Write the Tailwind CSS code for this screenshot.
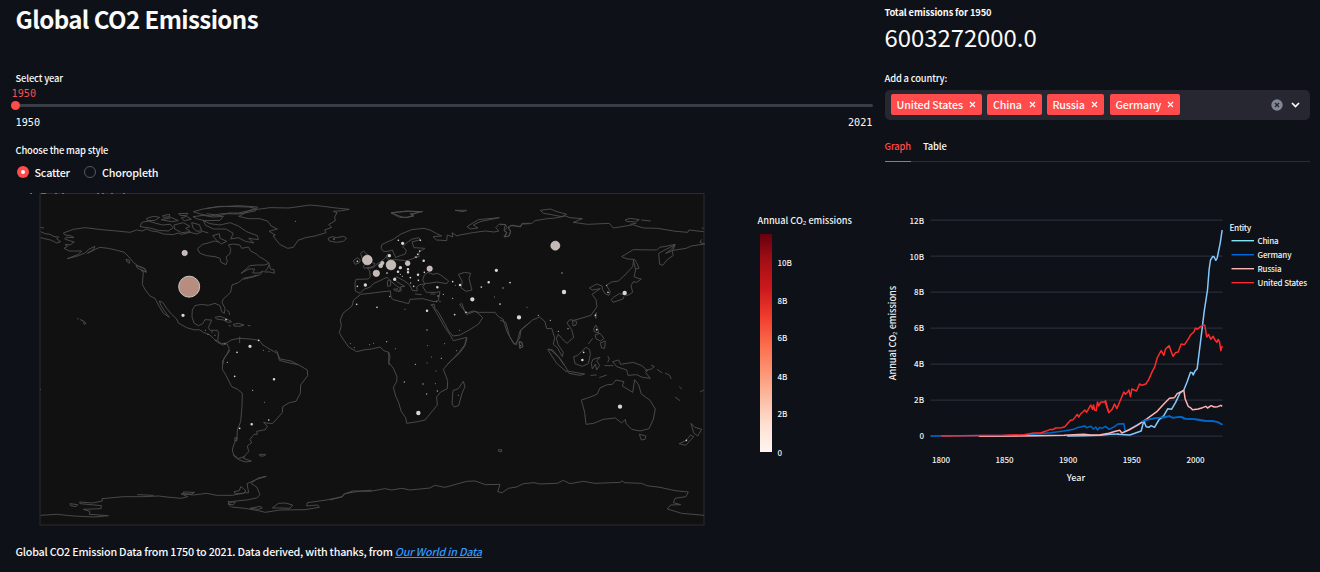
<!DOCTYPE html>
<html lang="en">
<head>
<meta charset="utf-8">
<title>Global CO2 Emissions</title>
<script src="https://cdn.jsdelivr.net/npm/@tailwindcss/browser@4"></script>
</head>
<body class="w-[1320px] h-[572px] overflow-hidden bg-[#0e1117] text-[#fafafa] font-['Noto_Sans_CJK_SC',sans-serif]">
<main class="flex h-[572px]">
  <section class="flex flex-col w-[872.500px] pl-[15.500px] shrink-0">
    <h1 class="h-[40px] leading-[38px] text-[24.1px] tracking-[-0.6px] font-bold whitespace-nowrap">Global CO2 Emissions</h1>
    <div class="mt-[30px] h-[16px] leading-[16px] text-[9.4px] tracking-[-0.14px] font-medium">Select year</div>
    <div class="-ml-[4px] mt-[1px] h-[13px] leading-[13px] text-[10.2px] text-[#ff4b4b] font-['DejaVu_Sans_Mono',monospace]">1950</div>
    <div class="-ml-[4.500px] flex items-center h-[11px]">
      <div class="size-[9px] rounded-full bg-[#ff4b4b]"></div>
      <div class="flex-1 h-[3px] rounded-r bg-[#3b3d46]"></div>
    </div>
    <div class="flex justify-between mt-[5px] h-[13px] leading-[13px] text-[10.2px] font-['DejaVu_Sans_Mono',monospace]"><span>1950</span><span>2021</span></div>
    <div class="mt-[14px] h-[16px] leading-[15px] text-[9.4px] tracking-[-0.15px] font-medium">Choose the map style</div>
    <div class="flex items-center mt-[4px] h-[18px] leading-[18px] text-[10.8px] tracking-[-0.2px] font-medium">
      <span class="ml-[1.500px] size-[12px] rounded-full bg-[#ff4b4b] flex items-center justify-center"><span class="size-[4px] rounded-full bg-white"></span></span>
      <span class="ml-[5.500px] w-[49.500px]">Scatter</span>
      <span class="size-[12px] rounded-full border border-[#555861]"></span>
      <span class="ml-[6px]">Choropleth</span>
    </div>
    <svg class="-ml-[15.500px] mt-[4px] block shrink-0" width="872" height="345" viewBox="0 185 872 345">
      <defs><linearGradient id="reds" x1="0" y1="1" x2="0" y2="0">
        <stop offset="0" stop-color="#fff5f0"/><stop offset=".125" stop-color="#fee0d2"/><stop offset=".25" stop-color="#fcbba1"/><stop offset=".375" stop-color="#fc9272"/><stop offset=".5" stop-color="#fb6a4a"/><stop offset=".625" stop-color="#ef3b2c"/><stop offset=".75" stop-color="#cb181d"/><stop offset=".875" stop-color="#a50f15"/><stop offset="1" stop-color="#67000d"/>
      </linearGradient></defs>
      <rect x="40" y="193.500" width="664" height="331.500" fill="#111" stroke="#2c2c2c"/>
      <path d="M30 193.500h2M41 193.500h5M55 193.500h2M62 193.500h2M97 193.500h2M102 193.500h2M111 193.500h2M123 193.500h2" stroke="#6d6f73"/>
      <g transform="translate(30 185) scale(.33333)" fill="none" stroke="#4d4d4d" stroke-width="2.800" stroke-linejoin="round">
        <!-- North America -->
        <path d="M32 127L42 129M32 140L45 146 60 148 72 155 86 156 80 162 92 170 80 174 65 166 48 162 32 158M337 138L320 135 300 142 260 138 215 134 165 128 130 133 100 144 105 150 122 152 132 158 108 157 104 162 122 168 133 171 120 180 105 178 112 184 102 190 118 198 135 198 155 198 145 208 112 221 140 214 165 204 178 192 195 184 190 194 172 205 198 192 210 187 235 190 262 196 283 202 295 214 310 232 325 244 345 252 348 262 333 254 340 264 337 298 346 315 360 333 375 340 388 365 400 385 418 397 405 380 392 360 388 348 398 352 410 370 425 388 440 402 445 414 470 428 495 435 508 434 520 442 540 450 550 460 562 472 580 480 590 476 598 490 592 505 582 520 578 540M590 474L575 476 563 468 566 445 562 436 540 436 535 428 545 405 525 404 518 416 505 422 492 414 486 395 487 375 495 362 515 358 535 361 555 355 570 362 575 380 583 385 585 370 576 352 580 342 602 322 606 300 625 293 640 280 665 275 680 270"/>
        <path d="M288 223L298 226 299 235 292 231ZM318 241L332 245 345 251 349 261 338 257 322 249ZM141 401L146 402M150 404L160 407 168 415 163 418 159 409M555 397L570 394 590 402 605 410 596 413 580 405 560 402ZM596 422L603 423M610 418L625 415 642 420 630 424 612 423ZM653 422H662M590 376L597 380 599 390"/>
        <path d="M337 138L350 132 365 138 385 141 400 147 430 149 444 144 455 148 480 142 500 147 518 139 535 144M330 125L336 112 355 108 378 115 398 120 420 118 430 128 415 138 385 136 360 129ZM350 100L370 94 389 97 376 106 352 107ZM398 92L418 88 420 95 400 97ZM393 104L425 98 445 107 425 110ZM446 86L474 85 469 92 450 91ZM454 99L470 94 484 103 463 107ZM490 80L520 72 560 66 625 62 683 66 676 78 625 87 575 86 542 93 515 88ZM489 95L520 91 548 96 580 94 570 106 525 107 502 102ZM520 107L540 116 570 120 600 113 625 123 650 140 682 152 685 164 656 160 672 174 646 169 625 158 602 162 610 145 588 132 550 132 527 121ZM432 120L460 113 480 124 467 130 481 140 455 143 434 132ZM485 113L508 119 515 137 501 139 489 129ZM548 152L568 146 570 160 590 169 574 177 560 166Z"/>
        <path d="M567 171L553 168 535 174 517 178 502 192 510 205 530 212 555 215 570 220 573 232 588 239 592 228 588 216 600 206 602 190 595 180 610 177 630 180 635 190 655 186 662 198 678 206 688 215"/>
        <!-- Eastern Canada, Greenland, Atlantic coasts -->
        <g transform="translate(510 0)">
          <path d="M178 215L195 225 208 235 193 240 170 240 150 242 135 255 123 265 147 252 164 252 158 264 177 264 190 258 180 269 160 276 146 279 130 283M203 250L208 238 211 252 222 254 223 265 210 261 194 261Z"/>
          <path d="M20 70L60 64 105 65 145 66 167 70 147 77 116 84 85 84 60 92 20 86M116 94L150 76 210 68 267 69 330 60 370 64 408 69 448 73 425 77 400 79 411 83 404 96 406 107 386 119 395 127 374 135 378 143 345 153 317 158 294 166 280 187 263 190 239 178 219 153 226 150 207 139 232 132 213 123 204 109 180 101 145 101ZM384 160L397 155 410 158 431 154 440 160 430 169 410 172 388 168Z"/>
          <path d="M75 478L93 465 118 460 150 462 177 466 189 480 210 493 232 505 240 522 273 528 296 540M119 455V474"/>
          <path d="M574 83L600 81 618 78 660 80 634 90 642 93 618 98 603 95Z"/>
        </g>
        <!-- Europe, Africa, west Asia -->
        <g transform="translate(900 0)">
          <path d="M600 116L578 117 568 124 543 122 534 126 542 138 538 153 524 156 531 143 522 135 526 119 508 117 497 128 507 138 492 141 466 138 428 143 390 150 381 153 366 143 369 156 352 150 350 167 319 165 309 155 335 153 320 146 302 136 282 130 245 134 213 147 190 163 156 178 153 190 161 200 178 198 187 195 197 218 211 212 226 207 229 195 218 185 234 170 248 162 267 158 271 164 246 171 252 188 285 190 272 198 266 203 267 216 255 214 252 220 231 227 195 224 176 225 170 218 179 211 174 206 166 219 152 230 138 239 130 248 112 250 119 258 121 275 115 282 78 283 75 295 76 318 90 325 103 312 120 307 130 296 154 285 160 282 171 277 184 290 199 302 212 311 204 320 214 317 211 306 224 304 200 290 193 278 201 276 222 287 239 300 247 316 262 318 260 306 269 299 285 297 278 305 289 322 320 322 330 320 325 347 312 350 278 341 240 343 236 356 190 344 183 338 181 318 160 320 120 325 92 328 71 345 66 363 39 385 31 405 34 422 28 443 39 462 56 486 80 500 100 495 125 492 150 486 162 497 176 502 177 540"/>
          <path d="M92 205L101 198 113 210 117 219 127 233 135 236 130 245 103 250 100 243 108 236 97 222ZM70 227L82 218 91 225 87 234 75 238ZM172 288L182 285 182 302 173 304ZM190 313L203 311 200 319ZM255 327L275 329M301 327H316M278 285L283 270 294 262 309 268 322 265 332 270 356 288 350 296 320 291 296 295 283 295ZM385 268L404 262 422 265 417 280 421 297 426 315 408 319 393 308 397 290ZM411 125L445 104 508 98 450 110 430 120 444 129 421 132ZM375 76H410L398 80ZM183 84L201 81 240 79 278 80 240 87 249 93 228 97 209 97Z"/>
          <path d="M302 361L312 357 315 370 326 383 344 415 356 438 369 453 390 450 421 433 446 417 458 398 446 386 435 379 416 386 410 389 404 379 396 356 389 358 398 371 411 384 430 378 446 382 495 382 505 395 519 402 531 440 550 475 559 479 570 438 600 412M304 358L328 398 340 420 361 451 370 467 410 457 404 480 386 503 365 526 350 540M568 470L576 473 578 485 570 489Z"/>
        </g>
        <!-- East Asia -->
        <g transform="translate(1410 0)">
          <path d="M0 119L16 118 21 128 12 137 20 143 12 155 26 154 32 140 25 130 35 120 62 126 66 115 96 115 105 107 142 101 166 99 196 93 210 98 247 101 220 112 263 118 328 115 340 129 378 123 398 119 430 129 472 130 528 139 563 142 567 135 611 140M611 130L605 129M605 163L600 172 614 177 574 183 558 190 520 196 497 205 515 192 526 178 502 183 479 187 470 195 400 194 365 215 382 222 401 223 398 245 375 270 355 288 335 291 319 301 331 320 327 331 315 326 308 314 306 303 290 297 268 309 277 315 301 311 276 328 288 344 291 365 273 391 240 401 221 406 209 404 201 414 215 434 221 457 201 475 185 460 175 448 169 460 175 480 190 502 187 515 172 488 160 478 164 458 155 430 140 431 135 410 119 396 98 405 63 434 59 460 44 478 29 455 18 413 0 405"/>
          <path d="M400 225L407 255 402 275 414 280 424 282 410 292 400 290 393 302 398 322 384 331 358 326 340 337 334 343 339 352 369 342 372 334M403 222L410 233 417 250 407 252M479 238L476 205 500 192 525 180 517 200 520 211 502 224 488 241ZM121 76L152 72 168 79 200 88 185 95 150 88 130 85ZM375 105L390 100 418 104 406 111 380 109ZM424 105L452 108M390 118L409 115M218 407L230 409 228 420 219 423ZM285 393L289 383 288 400ZM281 432L287 420 293 430 296 444 283 440ZM285 450L300 445 312 460 302 468 289 462ZM301 474L316 468 314 490 305 489ZM265 477L278 460M57 470L65 471 69 485 59 490Z"/>
          <path d="M145 492L158 495 175 515 192 540"/>
        </g>
        <!-- South America, Antarctica west -->
        <g transform="translate(0 495)">
          <path d="M600 0L590 15 578 32 577 58 588 76 605 110 623 118 637 130 636 170 632 215 622 240 621 262 611 285 607 300 612 318 628 330 648 336 664 333 640 325 647 314 656 305 652 288 665 278 660 268 672 253 682 253 680 244 706 239 712 229 701 217 714 220 728 220 740 207 757 188 758 170 778 158 798 154 811 130 812 105 833 77 832 60 805 44 779 39 748 31 742 6 736 0M615 263L622 264 620 273 614 272ZM612 315L625 326 645 319M688 313L707 313 703 318 690 318ZM30 118H33"/>
          <path d="M32 496L80 493 130 498 195 501 235 497 178 493 180 484 160 478 213 476 214 467 150 461 149 456 187 459 217 453 216 446 280 440 340 440 385 438 420 442 455 445 473 440 453 431 490 435 530 430 560 436 607 436 641 429 656 428 651 401 680 388 709 379 685 384 663 400 681 412 690 434 680 444 650 450 610 454 594 462 605 471 645 475 685 482 706 487 750 480 825 479 868 472 863 465 830 468 832 458 890 450 936 440 945 431 985 424 1020 421M120 461L143 464 138 470 122 467ZM460 426L494 427 485 432 462 432ZM322 434L370 436M612 425L628 422 632 410 640 415 648 423 638 431 616 431ZM594 454L616 457 610 464 597 463ZM660 475L690 469 697 474 686 478ZM727 474L745 460 766 459 788 465 780 475 750 474Z"/>
          <path d="M1020 421L1024 420"/>
        </g>
        <!-- Southern Africa, Australia, Antarctica east -->
        <g transform="translate(900 435)">
          <path d="M176 66L180 80 176 97 190 115 201 140 200 155 190 172 197 198 205 215 214 245 227 263 230 280 263 275 285 270 308 242 322 225 320 201 332 186 352 176 353 152 340 118 360 95 390 68 405 47 411 24M400 154L405 170 396 190 386 227 373 231 366 222 369 182 385 176ZM505 359L515 359 515 365 506 364Z"/>
          <path d="M653 59L663 60 690 85 712 119 709 125 680 100ZM712 123L740 128 764 132 750 136 717 130ZM782 136L800 135M808 143L830 135M731 80L742 77 768 52 779 59 781 74 775 101 757 109 735 101ZM789 88L810 82 800 93 809 106 800 120 796 102 787 117 784 100ZM833 78L838 87 833 97M823 107H850M848 95L866 90 872 103 910 97 935 107 953 122 947 128 961 145 937 142 920 134 894 136 890 120 860 110ZM945 122L964 117 973 110 963 105M981 118L997 129M1005 129L1018 135 1024 147M1048 169L1055 178M1035 201L1050 212M1110 186L1122 180"/>
          <path d="M754 210L770 205 801 193 810 174 832 164 847 163 858 150 882 155 877 168 908 187 914 149 926 165 934 192 960 211 976 237 970 268 957 296 930 303 905 298 888 280 886 268 875 279 856 264 820 268 791 280 768 283 764 247ZM928 313L948 318 945 328 934 330ZM1083 280L1095 292 1115 298 1103 318 1091 309ZM1047 341L1068 332 1082 315 1091 320 1067 346Z"/>
          <path d="M0 510L38 500 40 493 68 483 120 484 165 476 185 480 215 475 240 480 300 474 314 466 345 472 410 454 435 453 467 464 510 463 503 485 517 488 535 475 560 471 580 461 612 458 630 462 682 460 700 451 720 461 760 454 795 460 872 457 877 452 882 458 935 460 950 467 990 472 1035 482 1075 486 1068 500 1035 505 1030 518 1052 524 1022 525 1012 537 1055 550 1122 556"/>
        </g>
      </g>
      <!-- Emission bubbles, one per country -->
      <g transform="translate(30 185) scale(.33333)" fill="#c5b9b5" stroke="#ddd8d6" stroke-width="2">
        <circle cx="477.500" cy="305" r="31.500" fill="#b68d7f" stroke="#c8c8c8" stroke-width="3"/>
        <circle cx="464" cy="204" r="8"/><circle cx="1012" cy="225" r="14.500"/><circle cx="1083" cy="240" r="14.500"/><circle cx="1576" cy="182" r="13.500"/><circle cx="1039" cy="265" r="9.500"/><circle cx="1199" cy="251" r="8"/><circle cx="1133" cy="235" r="7"/><circle cx="1052" cy="242" r="6"/><circle cx="1057" cy="234" r="5"/>
      </g>
      <g transform="translate(30 185) scale(.33333)" fill="none" stroke="#d9d5d3" stroke-linecap="round">
        <path stroke-width="13" d="M1327 343h.1M1602 321h.1M1784 324h.1M1467 397h.1M1770 665h.1M1165 684h.1"/>
        <path stroke-width="10" d="M459 391h.1M660 484h.1M1006 300h.1M1094 283h.1M1111 248h.1M1399 256h.1M1118 175h.1M1078 212h.1"/>
        <path stroke-width="7.500" d="M732 583h.1M665 718h.1M1134 253h.1M1134 262h.1M1181 227h.1M1376 292h.1M1104 260h.1M1164 269h.1M1191 377h.1M1222 307h.1M1290 300h.1M1657 525h.1"/>
        <path stroke-width="5" d="M588 404h.1M686 466h.1M621 502h.1M614 574h.1M629 730h.1M716 705h.1M982 229h.1M982 304h.1M980 358h.1M1041 367h.1M1071 264h.1M1105 166h.1M1171 166h.1M1158 217h.1M1163 208h.1M1169 198h.1M1183 262h.1M1165 286h.1M1141 278h.1M1151 304h.1M1268 290h.1M1274 389h.1M1308 382h.1M1354 306h.1M1440 293h.1M1410 357h.1M1734 322h.1M1700 434h.1M1696 391h.1M1661 502h.1M1969 766h.1"/>
        <path stroke-width="3.800" stroke="#b5b2b0" d="M592 532h.1M668 616h.1M1117 274h.1M1111 268h.1M1142 294h.1M1224 333h.1M1240 328h.1M1268 340h.1M1419 309h.1M1596 264h.1M1730 301h.1M1525 391h.1M1561 406h.1M1585 439h.1M1614 431h.1M1070 470h.1M1191 435h.1M1234 520h.1M1156 538h.1M1179 597h.1M1190 627h.1M1222 618h.1M1123 591h.1M1079 334h.1M912 162h.1"/>
        <path stroke-width="3" stroke="#979593" d="M526 436h.1M546 441h.1M534 448h.1M555 451h.1M558 466h.1M583 476h.1M700 496h.1M717 500h.1M703 652h.1M796 109h.1M961 476h.1M973 488h.1M1019 479h.1M1031 475h.1M1096 491h.1M1125 373h.1M1193 482h.1M1244 476h.1M1279 497h.1M1289 436h.1M1205 516h.1M1191 534h.1M1218 558h.1M1216 596h.1M1285 631h.1M1393 336h.1M1491 367h.1M1276 301h.1M1219 350h.1M1230 350h.1M1472 482h.1"/>
      </g>
      <rect x="760" y="234" width="12" height="218" fill="url(#reds)"/>
      <g fill="#f1f1f1" font-size="8" font-weight="500">
        <text x="757.500" y="224.300" font-size="9.200" textLength="94.500">Annual CO₂ emissions</text>
        <text x="777.500" y="266">10B</text><text x="777.500" y="303.500">8B</text><text x="777.500" y="341.300">6B</text><text x="777.500" y="379.500">4B</text><text x="777.500" y="417.300">2B</text><text x="777.500" y="455.500">0</text>
      </g>
    </svg>
    <p class="mt-[13px] h-[18px] leading-[18px] text-[10.75px] tracking-[-0.21px] font-medium whitespace-nowrap">Global CO2 Emission Data from 1750 to 2021. Data derived, with thanks, from <a class="italic underline text-[#3498ff]">Our World in Data</a></p>
  </section>

  <section class="flex flex-col ml-[12px] w-[425.500px] shrink-0">
    <div class="mt-[5px] h-[16px] leading-[15px] text-[9.3px] tracking-[-0.12px] font-bold">Total emissions for 1950</div>
    <div class="h-[36px] leading-[32px] text-[23.9px] tracking-[-0.03px]">6003272000.0</div>
    <div class="mt-[13px] h-[16px] leading-[16px] text-[9.4px] tracking-[-0.16px] font-medium">Add a country:</div>
    <div class="mt-[4px] h-[29.500px] rounded-[5px] bg-[#262730] flex items-center pl-[6px] pr-[9.500px] text-[10.7px] tracking-[-0.14px] font-medium leading-[20px]">
      <span class="flex items-center justify-between w-[91px] h-[21px] mr-[5.500px] rounded-[2px] bg-[#ff4b4b] px-[6px]">United States<svg width="7" height="7" viewBox="0 0 7 7"><path d="M1 1l5 5M6 1L1 6" stroke="#fff" stroke-width="1.200"/></svg></span>
      <span class="flex items-center justify-between w-[54.500px] h-[21px] mr-[5px] rounded-[2px] bg-[#ff4b4b] px-[6px]">China<svg width="7" height="7" viewBox="0 0 7 7"><path d="M1 1l5 5M6 1L1 6" stroke="#fff" stroke-width="1.200"/></svg></span>
      <span class="flex items-center justify-between w-[57.500px] h-[21px] mr-[5.500px] rounded-[2px] bg-[#ff4b4b] px-[6px]">Russia<svg width="7" height="7" viewBox="0 0 7 7"><path d="M1 1l5 5M6 1L1 6" stroke="#fff" stroke-width="1.200"/></svg></span>
      <span class="flex items-center justify-between w-[70.500px] h-[21px] rounded-[2px] bg-[#ff4b4b] px-[6px]">Germany<svg width="7" height="7" viewBox="0 0 7 7"><path d="M1 1l5 5M6 1L1 6" stroke="#fff" stroke-width="1.200"/></svg></span>
      <svg class="ml-auto" width="12" height="12" viewBox="0 0 12 12"><circle cx="6" cy="6" r="5.700" fill="#828696"/><path d="M4 4l4 4M8 4L4 8" stroke="#262730" stroke-width="1.300"/></svg>
      <svg class="ml-[6.500px]" width="11" height="10" viewBox="0 0 11 10"><path d="M2 3l3.500 3.500L9 3" fill="none" stroke="#fff" stroke-width="1.700"/></svg>
    </div>
    <div class="mt-[14.500px] flex gap-[12px] h-[28px] border-b border-[#2c2e36] text-[9.4px] tracking-[-0.15px] font-medium leading-[25px]">
      <span class="h-[28px] border-b border-[#ff4b4b] text-[#ff4b4b] w-[26.500px]">Graph</span><span>Table</span>
    </div>
    <svg class="mt-[8px] block overflow-visible" width="426" height="330" viewBox="884.500 170 426 330">
      <path d="M930 220.500H1222M930 256.500H1222M930 292.500H1222M930 328.500H1222M930 364.500H1222M930 400.500H1222M930 436.500H1222" transform="translate(0 -.4)" stroke="#31333f"/>
      <g fill="none" stroke-width="4.500" stroke-linejoin="round">
        <g transform="translate(870 200) scale(.33333)">
          <path stroke="#83c9ff" d="M590 708L640 707 690 706 720 703 745 702"/>
          <path stroke="#0068c9" d="M180 708L440 706 500 702 540 698 580 693 610 688 620 683 643 678 648 683 662 679 668 687 676 681 681 690 687 682 694 685 705 679 716 688 732 680 742 672 760 671 764 694 780 686 800 674 830 660 850 655 880 653 897 648 905 653 930 650 940 656 970 658 1000 663 1025 662 1040 666 1050 671 1056 674"/>
          <path stroke="#ffb3b3" d="M325 709L500 707 580 706 640 703 660 705 690 704 715 700 735 694 748 691 754 699 775 690 800 676 830 656 860 634 880 612 897 595 912 593"/>
          <path stroke="#ff2b2b" d="M212 708L400 706 460 704 490 699 510 699 525 694 540 688 547 689 555 684 573 683 583 680 590 672 600 661 608 659 615 650 620 643 625 651 630 642 637 636 643 630 648 637 655 625 661 615 666 628 669 615 672 630 677 632 681 606 685 618 690 607 695 606 703 606 705 602 715 638"/>
        </g>
        <g transform="translate(1100 200) scale(.33333)">
          <path stroke="#83c9ff" d="M50 703L88 705 105 699 122 693 130 662 137 680 145 682 152 677 162 682 175 660 190 647 202 626 213 628 225 608 238 580 250 570 260 545 270 517 275 518 278 525 283 514 290 506 297 450 305 385 311 335 321 270 326 207 330 180 337 169 341 171 346 181 350 174 359 130 365 90"/>
          <path stroke="#0068c9" d="M124 665L137 660 165 655 205 649 218 653 245 651 255 656 290 658 320 663 350 665 365 674"/>
          <path stroke="#ffb3b3" d="M222 593L230 581 250 571 254 597 263 619 270 623 276 629 293 627 306 623 316 619 321 624 332 617 341 621 352 620 361 616 365 619"/>
          <path stroke="#ff2b2b" d="M13 604L25 638 35 628 42 612 49 626 60 600 70 576 75 583 82 575 85 570 90 590 94 567 108 573 117 552 124 556 136 552 145 538 155 515 163 500 170 474 182 452 190 466 195 447 206 437 212 455 218 469 225 458 233 456 242 432 252 434 264 416 270 405 280 396 285 384 290 388 300 380 307 376 313 376 316 395 319 411 324 403 331 418 338 409 344 421 349 427 353 418 357 425 361 452 365 438"/>
        </g>
      </g>
      <g fill="#f3f3f3" font-size="8" font-weight="500">
        <g text-anchor="end"><text x="923.500" y="223.500">12B</text><text x="923.500" y="259.500">10B</text><text x="923.500" y="295.200">8B</text><text x="923.500" y="331.200">6B</text><text x="923.500" y="367.200">4B</text><text x="923.500" y="403.200">2B</text><text x="923.500" y="439.200">0</text></g>
        <g text-anchor="middle"><text x="940.500" y="463">1800</text><text x="1004" y="463">1850</text><text x="1067.700" y="463">1900</text><text x="1131.300" y="463">1950</text><text x="1195" y="463">2000</text><text x="1075.500" y="480.500" font-size="9">Year</text><text transform="translate(895 333) rotate(-90)" font-size="9.200" textLength="94.500">Annual CO₂ emissions</text></g>
        <text x="1229" y="230.500" font-size="8.300" textLength="21.700">Entity</text>
        <text x="1257" y="244.200" textLength="21">China</text><text x="1257" y="258.200" textLength="34">Germany</text><text x="1257" y="272.200" textLength="24">Russia</text><text x="1257" y="286.200" textLength="49.500">United States</text>
      </g>
      <g stroke-width="1.400"><path stroke="#83e3f2" d="M1231 240.700h22.500"/><path stroke="#0068e0" d="M1231 254.700h22.500"/><path stroke="#ffb3b3" d="M1231 268.700h22.500"/><path stroke="#ff2b2b" d="M1231 282.700h22.500"/></g>
    </svg>
  </section>
</main>
</body>
</html>
